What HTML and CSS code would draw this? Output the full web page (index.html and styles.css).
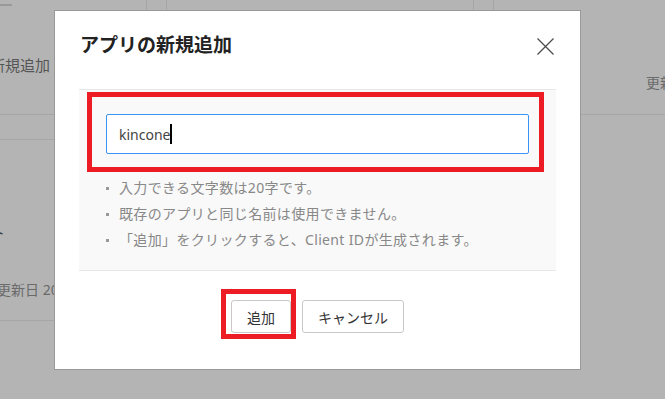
FILE: index.html
```html
<!DOCTYPE html>
<html lang="ja">
<head>
    <title>アプリの新規追加</title>
    <meta charset="UTF-8">
    <link rel="stylesheet" href="styles.css">
</head>
<body>
    <div class="page">
        <div class="cards">
            <div class="card card_first">
                <div class="card_main">
                    <span class="dash"></span>
                    <span class="add_link">新規追加</span>
                </div>
                <div class="card_foot"></div>
            </div>
            <div class="card"></div>
            <div class="card card_last">
                <div class="card_main">
                    <span class="updated">更新日 2020/04/01</span>
                </div>
            </div>
            <div class="card card_app">
                <div class="app_name">アプリテスト</div>
                <div class="updated">更新日 2020/04/01</div>
            </div>
        </div>
    </div>

    <div class="modal">
        <div class="modal_head">
            <h2 class="modal_title">アプリの新規追加</h2>
            <span class="close">
                <svg width="17" height="17" viewBox="0 0 17 17">
                    <path d="M0.5 0.5L16.5 16.5M16.5 0.5L0.5 16.5" stroke="#4a4a4a" stroke-width="1.2" fill="none"/>
                </svg>
            </span>
        </div>
        <div class="modal_body">
            <div class="name_box">kincone<span class="caret"></span></div>
            <ul class="notes">
                <li>入力できる文字数は20字です。</li>
                <li>既存のアプリと同じ名前は使用できません。</li>
                <li>「追加」をクリックすると、Client IDが生成されます。</li>
            </ul>
            <div class="mark mark_input"></div>
        </div>
        <div class="modal_foot">
            <span class="btn_wrap">
                <button class="btn">追加</button>
                <span class="mark mark_btn"></span>
            </span>
            <button class="btn">キャンセル</button>
        </div>
    </div>
</body>
</html>
```

FILE: styles.css
```css
body{
    margin: 0;
    font-family: "Noto Sans", "Noto Sans CJK JP", sans-serif;
}
.page{
    width: 665px;
    height: 399px;
    background: #b4b4b4;
    overflow: hidden;
}
.cards{
    display: grid;
    grid-template-columns: repeat(3, 308px);
    column-gap: 19px;
    row-gap: 20px;
    margin-left: -161px;
}
.card{
    border-left: 1px solid #a6a6a6;
    border-right: 1px solid #a6a6a6;
}
.card_main{
    height: 115px;
    box-sizing: border-box;
    border-bottom: 1px solid #a6a6a6;
    display: flex;
    flex-direction: column;
    align-items: flex-start;
}
.card_first .card_main{
    padding-left: 150px;
}
.dash{
    width: 12px;
    height: 2px;
    margin: 4px 0 0 10px;
    background: #999;
}
.add_link{
    margin-top: 48px;
    font-size: 15px;
    line-height: 22px;
    color: #555;
}
.card_foot{
    height: 25px;
    box-sizing: border-box;
    border-bottom: 1px solid #a6a6a6;
}
.card_last .card_main{
    padding: 72px 0 0 152px;
}
.updated{
    font-size: 14px;
    line-height: 22px;
    color: #6a6a6a;
}
.card_app{
    padding: 61px 0 19px;
    border-bottom: 1px solid #a6a6a6;
}
.app_name{
    padding-left: 75px;
    font-size: 15px;
    line-height: 22px;
    color: #333;
}
.card_app .updated{
    margin-top: 36px;
    padding-left: 157px;
}

.modal{
    position: absolute;
    left: 54px;
    top: 10px;
    width: 525px;
    background: #fff;
    border: 1px solid #999;
}
.modal_head{
    height: 78px;
    box-sizing: border-box;
    padding: 21px 26px 0 25px;
    display: flex;
    justify-content: space-between;
    align-items: flex-start;
}
.modal_title{
    margin: 0;
    font-size: 19px;
    line-height: 26px;
    font-weight: bold;
    color: #222;
}
.close{
    display: block;
    width: 17px;
    height: 17px;
    margin-top: 6px;
}
.close svg{
    display: block;
}
.modal_body{
    position: relative;
    margin: 0 24px;
    padding: 24px 27px 17px;
    background: #f9f9f9;
    border-top: 1px solid #e8e8e8;
    border-bottom: 1px solid #e8e8e8;
}
.name_box{
    height: 40px;
    box-sizing: border-box;
    padding: 0 12px;
    display: flex;
    align-items: center;
    background: #fff;
    border: 1px solid #3b93f5;
    border-radius: 2px;
    font-size: 14px;
    color: #444;
}
.caret{
    width: 2px;
    height: 20px;
    background: #000;
}
.notes{
    margin: 21px 0 0;
    padding: 0;
    list-style: none;
}
.notes li{
    position: relative;
    padding-left: 13px;
    font-size: 14px;
    line-height: 26px;
    letter-spacing: 0.35px;
    color: #888;
}
.notes li::before{
    content: "";
    position: absolute;
    left: 0;
    top: 12px;
    width: 3px;
    height: 3px;
    background: #999;
}
.mark{
    position: absolute;
    box-sizing: border-box;
    border: 5px solid #ed1c24;
}
.mark_input{
    left: 8px;
    top: 2px;
    width: 457px;
    height: 80px;
}
.modal_foot{
    display: flex;
    justify-content: center;
    gap: 11px;
    padding: 29px 0 36px;
}
.btn_wrap{
    position: relative;
    display: block;
}
.mark_btn{
    left: -10px;
    top: -11px;
    width: 75px;
    height: 50px;
}
.btn{
    display: block;
    height: 33px;
    padding: 0 15px;
    background: #fff;
    border: 1px solid #c9c9c9;
    border-radius: 3px;
    font-family: inherit;
    font-size: 14px;
    color: #333;
}
```
